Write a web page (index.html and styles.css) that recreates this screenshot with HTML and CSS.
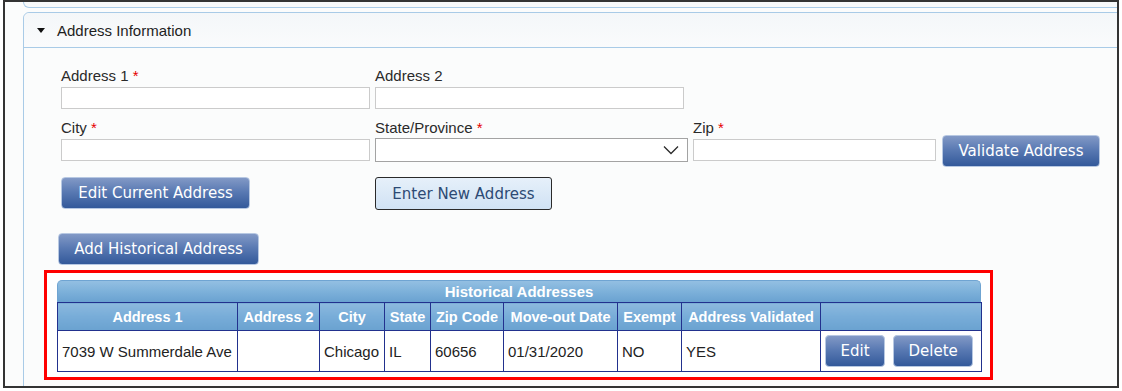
FILE: index.html
```html
<!DOCTYPE html>
<html lang="en">
<head>
  <meta charset="UTF-8" />
  <title>Address Information</title>
  <link rel="stylesheet" href="styles.css">
</head>
<body>
  <div class="frame">
    <div class="prev-panel"></div>

    <!-- Address panel -->
    <div class="panel">
      <div class="panel-head"><span class="caret"></span>Address Information</div>
      <div class="panel-body">
        <div class="row">
          <div class="field">
            <label for="addr1">Address 1 <span class="req">*</span></label>
            <input type="text" id="addr1" class="text w-309" />
          </div>
          <div class="field">
            <label for="addr2">Address 2</label>
            <input type="text" id="addr2" class="text w-309" />
          </div>
        </div>

        <div class="row row-second">
          <div class="field">
            <label for="city">City <span class="req">*</span></label>
            <input type="text" id="city" class="text w-309" />
          </div>
          <div class="field">
            <label for="state">State/Province <span class="req">*</span></label>
            <div class="select-wrap">
              <select id="state" class="select"></select>
              <svg class="chevron" width="16" height="10" viewBox="0 0 16 10">
                <polyline points="1,1.5 8,8.5 15,1.5" fill="none" stroke="#2b2b2b" stroke-width="1.3" />
              </svg>
            </div>
          </div>
          <div class="field">
            <label for="zip">Zip <span class="req">*</span></label>
            <input type="text" id="zip" class="text w-243" />
          </div>
          <button class="btn btn-validate">Validate Address</button>
        </div>

        <div class="row row-actions">
          <button class="btn btn-edit-current">Edit Current Address</button>
          <button class="btn-light">Enter New Address</button>
        </div>

        <div class="row row-add">
          <button class="btn btn-add">Add Historical Address</button>
        </div>

        <!-- Historical addresses -->
        <div class="history-box">
          <div class="history">
            <div class="history-title">Historical Addresses</div>
            <table class="history-table">
              <colgroup>
                <col style="width:180px">
                <col style="width:82px">
                <col style="width:65px">
                <col style="width:46px">
                <col style="width:73px">
                <col style="width:114px">
                <col style="width:64px">
                <col style="width:139px">
                <col style="width:161px">
              </colgroup>
              <thead>
                <tr>
                  <th>Address 1</th>
                  <th>Address 2</th>
                  <th>City</th>
                  <th>State</th>
                  <th>Zip Code</th>
                  <th>Move-out Date</th>
                  <th>Exempt</th>
                  <th>Address Validated</th>
                  <th></th>
                </tr>
              </thead>
              <tbody>
                <tr>
                  <td>7039 W Summerdale Ave</td>
                  <td></td>
                  <td>Chicago</td>
                  <td>IL</td>
                  <td>60656</td>
                  <td>01/31/2020</td>
                  <td>NO</td>
                  <td>YES</td>
                  <td class="cell-actions">
                    <button class="btn btn-small btn-edit">Edit</button>
                    <button class="btn btn-small btn-delete">Delete</button>
                  </td>
                </tr>
              </tbody>
            </table>
          </div>
        </div>
      </div>
    </div>
  </div>
</body>
</html>
```

FILE: styles.css
```css
* {
  box-sizing: border-box;
  margin: 0;
  padding: 0;
}

body {
  background: #fff;
  font-family: 'Liberation Sans', Arial, sans-serif;
  font-size: 15px;
  color: #222;
}

.frame {
  margin-left: 3px;
  width: 1116px;
  height: 388px;
  border: 2px solid #333;
  background: #fbfcfc;
  overflow: hidden;
  padding-left: 18px;
}

.prev-panel {
  height: 6px;
  margin-right: -30px;
  border: 1px solid #a9cbe7;
  border-top: none;
  border-radius: 0 0 6px 6px;
  background: #f7f9fa;
}

.panel {
  margin-top: 4px;
  margin-right: -30px;
  border: 1px solid #a9cbe7;
  border-radius: 6px 6px 0 0;
  height: 400px;
}

.panel-head {
  display: flex;
  align-items: center;
  height: 35px;
  padding-left: 13px;
  border-bottom: 1px solid #a9cbe7;
  background: linear-gradient(#f4f7f9, #fafbfc);
  border-radius: 6px 6px 0 0;
  color: #1e1e1e;
}

.caret {
  width: 0;
  height: 0;
  border-left: 4px solid transparent;
  border-right: 4px solid transparent;
  border-top: 5px solid #111;
  margin-right: 12px;
}

.panel-body {
  padding: 19px 0 0 37px;
}

.row {
  display: flex;
  gap: 5px;
}

.row-second {
  margin-top: 10px;
}

.field label {
  display: block;
  line-height: 17px;
  height: 17px;
  margin-bottom: 3px;
  color: #2a2a2a;
}

.req {
  color: #e60000;
}

.text {
  display: block;
  height: 22px;
  border: 1px solid #cbcbcb;
  background: #fff;
  font: inherit;
}

.w-309 {
  width: 309px;
}

.w-243 {
  width: 243px;
}

.select-wrap {
  position: relative;
  margin-top: -1px;
}

.select {
  display: block;
  width: 313px;
  height: 24px;
  border: 1px solid #a3a3a3;
  background: #fff;
  appearance: none;
  -webkit-appearance: none;
  border-radius: 0;
}

.chevron {
  position: absolute;
  right: 9px;
  top: 7px;
}

/* Buttons */
.btn {
  height: 32px;
  border: 1px solid #b7c8e2;
  border-radius: 4px;
  background: linear-gradient(#8299c6, #5a7ab3 45%, #33599a);
  color: #fff;
  font-family: 'DejaVu Sans', Verdana, sans-serif;
  font-size: 15px;
  text-align: center;
  cursor: pointer;
}

.btn-validate {
  width: 158px;
  align-self: flex-end;
  margin-left: 1px;
  margin-bottom: -5px;
}

.row-actions {
  margin-top: 15px;
  gap: 125px;
}

.btn-edit-current {
  width: 189px;
}

.btn-light {
  width: 177px;
  height: 33px;
  border: 1px solid #2a2a2a;
  border-radius: 3px;
  background: linear-gradient(#e6f0fa, #d0e2f4);
  color: #2d4a74;
  font-family: 'DejaVu Sans', Verdana, sans-serif;
  font-size: 15px;
  cursor: pointer;
}

.row-add {
  margin-top: 23px;
  margin-left: -3px;
}

.btn-add {
  width: 201px;
}

/* Historical table */
.history-box {
  margin-top: 5px;
  margin-left: -17px;
  width: 949px;
  border: 3px solid #ff0000;
  padding: 7px 9px 5px 10px;
  background: #fff;
}

.history {
  width: 924px;
}

.history-title {
  height: 22px;
  line-height: 22px;
  border: 1px solid #6fa4d2;
  border-bottom: none;
  border-radius: 5px 5px 0 0;
  background: linear-gradient(#93bfe2, #7db1da 50%, #6aa2d1);
  color: #fff;
  font-weight: bold;
  font-size: 15px;
  text-align: center;
}

.history-table {
  width: 924px;
  table-layout: fixed;
  border-collapse: collapse;
}

.history-table th {
  height: 28px;
  border: 1px solid #22318e;
  background: linear-gradient(#8cb9de, #77acd8 50%, #6aa2d0);
  color: #fff;
  font-size: 14.5px;
  font-weight: bold;
  text-align: center;
  white-space: nowrap;
  overflow: hidden;
}

.history-table td {
  height: 41px;
  border: 1px solid #22318e;
  background: #fff;
  padding: 0 4px;
  color: #222;
  white-space: nowrap;
}

.history-table td.cell-actions {
  padding: 0 0 0 4px;
}

.btn-small {
  vertical-align: middle;
}

.btn-edit {
  width: 60px;
}

.btn-delete {
  width: 80px;
  margin-left: 4px;
}
```
